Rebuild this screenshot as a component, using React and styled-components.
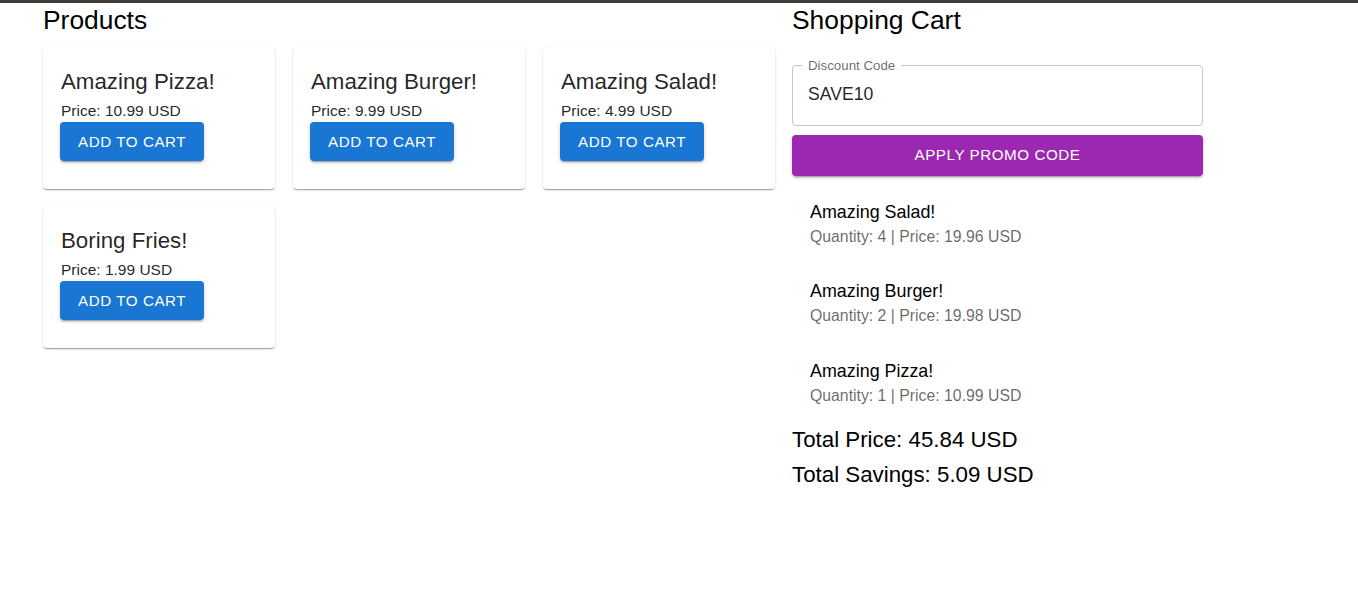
import styled, { createGlobalStyle } from 'styled-components';

const GlobalStyle = createGlobalStyle`
  body {
    margin: 0;
    background: #fff;
    font-family: "Liberation Sans", Arial, sans-serif;
    color: rgba(0, 0, 0, 0.87);
  }
`;

const products = [
  { id: 1, name: 'Amazing Pizza!', price: 10.99 },
  { id: 2, name: 'Amazing Burger!', price: 9.99 },
  { id: 3, name: 'Amazing Salad!', price: 4.99 },
  { id: 4, name: 'Boring Fries!', price: 1.99 },
];

const cart = [
  { id: 3, name: 'Amazing Salad!', qty: 4, total: '19.96' },
  { id: 2, name: 'Amazing Burger!', qty: 2, total: '19.98' },
  { id: 1, name: 'Amazing Pizza!', qty: 1, total: '10.99' },
];

const TopBar = styled.div`
  height: 3px;
  background: #3d3a37;
`;

const Page = styled.main`
  display: flex;
  gap: 17px;
  padding: 2px 0 0 43px;
`;

const ProductsColumn = styled.section`
  width: 732px;
`;

const CartColumn = styled.section`
  width: 411px;
`;

const Heading = styled.h2`
  margin: 0;
  font-size: 26.4px;
  font-weight: 400;
  line-height: 30px;
  color: #000;
`;

const ProductGrid = styled.div`
  display: grid;
  grid-template-columns: repeat(3, 232px);
  column-gap: 18px;
  row-gap: 17px;
  margin-top: 12px;
`;

const Card = styled.article`
  background: #fff;
  border-radius: 4px;
  padding: 20px 17px 28px;
  box-shadow: 0 2px 1px -1px rgba(0, 0, 0, 0.2), 0 1px 1px 0 rgba(0, 0, 0, 0.14),
    0 1px 3px 0 rgba(0, 0, 0, 0.12);
`;

const CardTitle = styled.h3`
  margin: 0 0 4px 1px;
  font-size: 22.3px;
  font-weight: 400;
  line-height: 29px;
`;

const CardPrice = styled.p`
  margin: 0 0 0 1px;
  font-size: 15.5px;
  line-height: 22px;
`;

const Button = styled.button`
  display: ${(p) => (p.$block ? 'flex' : 'inline-flex')};
  width: ${(p) => (p.$block ? '100%' : 'auto')};
  justify-content: center;
  align-items: center;
  border: 0;
  border-radius: 4px;
  padding: ${(p) => (p.$block ? '7.5px 18px' : '6.5px 18px')};
  font-family: inherit;
  font-size: 15.2px;
  line-height: 26px;
  letter-spacing: 0.55px;
  text-transform: uppercase;
  color: #fff;
  background: ${(p) => p.$color};
  cursor: pointer;
  box-shadow: 0 3px 1px -2px rgba(0, 0, 0, 0.2), 0 2px 2px 0 rgba(0, 0, 0, 0.14),
    0 1px 5px 0 rgba(0, 0, 0, 0.12);
`;

const Field = styled.fieldset`
  margin: 22.5px 0 0;
  padding: 0 0 11.5px 9px;
  border: 1px solid #c4c4c4;
  border-radius: 4px;
  min-width: 0;
`;

const Legend = styled.legend`
  padding: 0 6px;
  font-size: 13.3px;
  line-height: 15px;
  color: rgba(0, 0, 0, 0.6);
`;

const Input = styled.input`
  display: block;
  box-sizing: border-box;
  width: calc(100% - 9px);
  height: 38px;
  margin-top: 2.5px;
  padding: 0 6px;
  border: 0;
  outline: 0;
  font-family: inherit;
  font-size: 17.6px;
  color: rgba(0, 0, 0, 0.87);
  background: transparent;
`;

const PromoRow = styled.div`
  margin-top: 9px;
`;

const CartList = styled.ul`
  list-style: none;
  margin: 0;
  padding: 8px 0 0;
`;

const CartItem = styled.li`
  padding: 9.5px 18px 9px;
`;

const ItemText = styled.div`
  margin: 6px 0;
`;

const ItemName = styled.div`
  font-size: 17.9px;
  line-height: 26.7px;
  color: #000;
`;

const ItemMeta = styled.div`
  font-size: 15.8px;
  line-height: 22.2px;
  color: rgba(0, 0, 0, 0.6);
`;

const Total = styled.p`
  margin: 0;
  font-size: 22.3px;
  line-height: 35.2px;
  color: #000;
`;

export default function App() {
  return (
    <>
      <GlobalStyle />
      <TopBar />
      <Page>
        <ProductsColumn>
          <Heading>Products</Heading>
          <ProductGrid>
            {products.map((p) => (
              <Card key={p.id}>
                <CardTitle>{p.name}</CardTitle>
                <CardPrice>Price: {p.price} USD</CardPrice>
                <Button $color="#1976d2">Add to cart</Button>
              </Card>
            ))}
          </ProductGrid>
        </ProductsColumn>

        <CartColumn>
          <Heading>Shopping Cart</Heading>
          <Field>
            <Legend>Discount Code</Legend>
            <Input defaultValue="SAVE10" />
          </Field>
          <PromoRow>
            <Button $block $color="#9c27b0">Apply promo code</Button>
          </PromoRow>
          <CartList>
            {cart.map((item) => (
              <CartItem key={item.id}>
                <ItemText>
                  <ItemName>{item.name}</ItemName>
                  <ItemMeta>
                    Quantity: {item.qty} | Price: {item.total} USD
                  </ItemMeta>
                </ItemText>
              </CartItem>
            ))}
          </CartList>
          <Total>Total Price: 45.84 USD</Total>
          <Total>Total Savings: 5.09 USD</Total>
        </CartColumn>
      </Page>
    </>
  );
}
